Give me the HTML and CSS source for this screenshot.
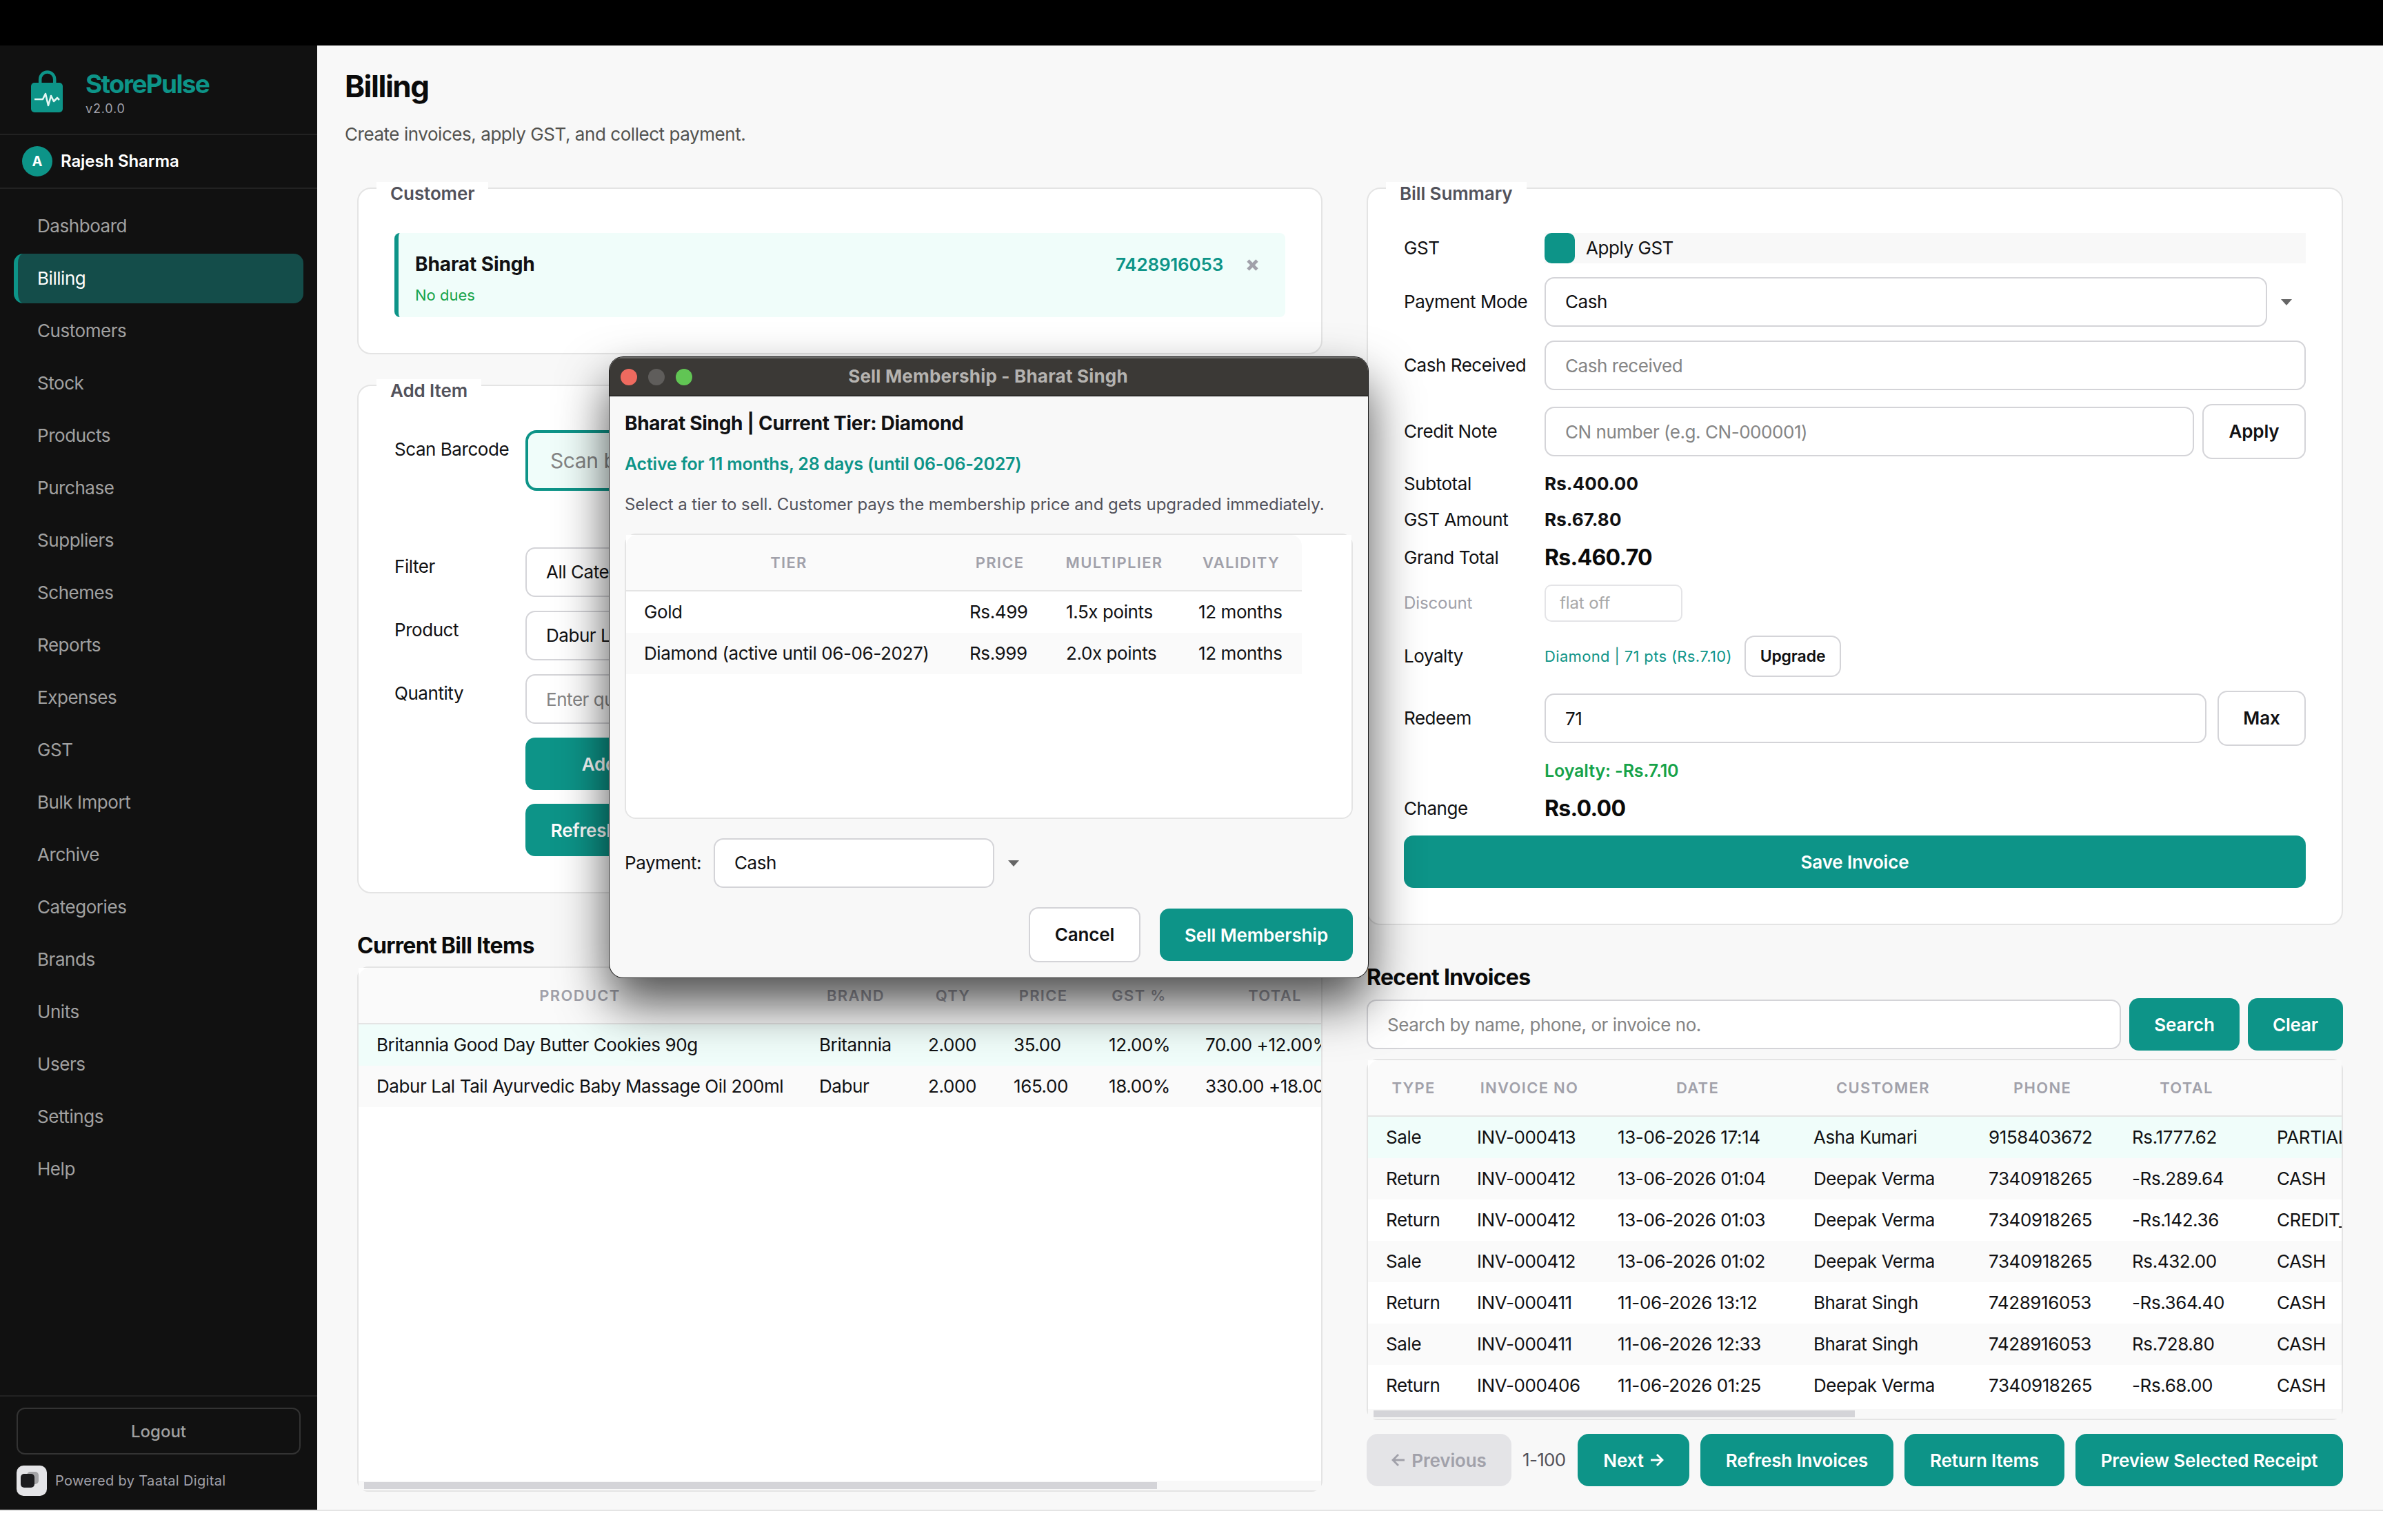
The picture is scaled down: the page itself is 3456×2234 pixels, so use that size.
FILE: index.html
```html
<!DOCTYPE HTML>
<html>
	<head>
		<meta charset='utf-8' />
		<title>StorePulse - Billing</title>
		<link rel="stylesheet" href="styles.css">
	</head>
	<body>
		<div class='topbar'></div>
		<div class='app'>
			<div class='sidebar'>
				<div class='brand'>
					<svg class='logo' width='46' height='62' viewBox='0 0 46 62'>
						<path d='M13.200 20V13a10.500 10.500 0 0 1 21 0v7' fill='none' stroke='#0d9488' stroke-width='4.500'/>
						<rect x='0' y='18' width='46' height='43' rx='5' fill='#0d9488'/>
						<path d='M5 42h12l4-8 4 17 4-14 4 8 5-5 3 3' fill='none' stroke='#e3f6f3' stroke-width='2.600' stroke-linejoin='round'/>
					</svg>
					<div>
						<div class='name'>StorePulse</div>
						<div class='version'>v2.0.0</div>
					</div>
				</div>
				<div class='user'><span class='avatar'>A</span>Rajesh Sharma</div>
				<ul class='menu'>
					<li>Dashboard</li>
					<li class='active'>Billing</li>
					<li>Customers</li>
					<li>Stock</li>
					<li>Products</li>
					<li>Purchase</li>
					<li>Suppliers</li>
					<li>Schemes</li>
					<li>Reports</li>
					<li>Expenses</li>
					<li>GST</li>
					<li>Bulk Import</li>
					<li>Archive</li>
					<li>Categories</li>
					<li>Brands</li>
					<li>Units</li>
					<li>Users</li>
					<li>Settings</li>
					<li>Help</li>
				</ul>
				<div class='side-foot'>
					<div class='logout'>Logout</div>
					<div class='powered'>
						<svg width='44' height='44' viewBox='0 0 44 44'>
							<rect width='44' height='44' rx='10' fill='#e4e4e7'/>
							<rect x='15' y='9' width='17' height='18' rx='5' fill='#a3a3a6'/>
							<rect x='6' y='12' width='20' height='20' rx='5' fill='#1c1c1f'/>
						</svg>
						<span>Powered by Taatal Digital</span>
					</div>
				</div>
			</div>

			<div class='main'>
				<h1>Billing</h1>
				<p class='subtitle'>Create invoices, apply GST, and collect payment.</p>
				<div class='columns'>
					<div class='left'>
						<div class='group'>
							<div class='group-title'>Customer</div>
							<div class='customer'>
								<div class='who'>
									<div class='cust-name'>Bharat Singh</div>
									<div class='dues'>No dues</div>
								</div>
								<div class='phone'>7428916053</div>
								<svg class='close' width='17' height='17' viewBox='0 0 17 17'><path d='M2 2l13 13M15 2L2 15' stroke='#a1a1aa' stroke-width='4.600'/></svg>
							</div>
						</div>
						<div class='group add-item'>
							<div class='group-title'>Add Item</div>
							<div class='row scan'><label>Scan Barcode</label><input class='input' placeholder='Scan barcode'></div>
							<div class='row'><label>Filter</label><div class='input'>All Categories</div></div>
							<div class='row'><label>Product</label><div class='input'>Dabur Lal Tail</div></div>
							<div class='row'><label>Quantity</label><input class='input' placeholder='Enter quantity'></div>
							<div class='row'><label></label><div class='btn'>Add to Bill</div></div>
							<div class='row'><label></label><div class='btn'>Refresh Products</div></div>
						</div>
						<h2>Current Bill Items</h2>
						<div class='table-box bill'>
							<div class='table-in'>
								<table class='bill-table'>
									<colgroup><col class='b1'><col class='b2'><col class='b3'><col class='b4'><col class='b5'><col class='b6'></colgroup>
									<tr><th>PRODUCT</th><th>BRAND</th><th>QTY</th><th>PRICE</th><th>GST %</th><th>TOTAL</th></tr>
									<tr class='sel'><td>Britannia Good Day Butter Cookies 90g</td><td>Britannia</td><td>2.000</td><td>35.00</td><td>12.00%</td><td>70.00 +12.00%</td></tr>
									<tr class='alt'><td>Dabur Lal Tail Ayurvedic Baby Massage Oil 200ml</td><td>Dabur</td><td>2.000</td><td>165.00</td><td>18.00%</td><td>330.00 +18.00%</td></tr>
								</table>
								<div class='scroll'><div class='thumb'></div></div>
							</div>
						</div>
					</div>

					<div class='right'>
						<div class='group summary'>
							<div class='group-title'>Bill Summary</div>
							<div class='row'><label>GST</label><div class='check'><span class='box'></span>Apply GST</div></div>
							<div class='row'><label>Payment Mode</label><div class='input'>Cash</div><div class='arrow'></div></div>
							<div class='row'><label>Cash Received</label><input class='input' placeholder='Cash received'></div>
							<div class='row'><label>Credit Note</label><input class='input' placeholder='CN number (e.g. CN-000001)'><div class='btn-o apply'>Apply</div></div>
							<div class='row'><label>Subtotal</label><b>Rs.400.00</b></div>
							<div class='row'><label>GST Amount</label><b>Rs.67.80</b></div>
							<div class='row big'><label>Grand Total</label><b>Rs.460.70</b></div>
							<div class='row discount'><label>Discount</label><input class='input' placeholder='flat off'></div>
							<div class='row'><label>Loyalty</label><span class='pts'>Diamond | 71 pts (Rs.7.10)</span><div class='btn-o upgrade'>Upgrade</div></div>
							<div class='row'><label>Redeem</label><input class='input' value='71'><div class='btn-o max'>Max</div></div>
							<div class='row'><label></label><span class='off'>Loyalty: -Rs.7.10</span></div>
							<div class='row big'><label>Change</label><b>Rs.0.00</b></div>
							<div class='btn'>Save Invoice</div>
						</div>
						<h2>Recent Invoices</h2>
						<div class='search'>
							<input class='input' placeholder='Search by name, phone, or invoice no.'>
							<div class='btn b-search'>Search</div>
							<div class='btn b-clear'>Clear</div>
						</div>
						<div class='table-box invoices'>
							<div class='table-in'>
								<table class='inv-table'>
									<colgroup><col class='i1'><col class='i2'><col class='i3'><col class='i4'><col class='i5'><col class='i6'><col class='i7'></colgroup>
									<tr><th>TYPE</th><th>INVOICE NO</th><th>DATE</th><th>CUSTOMER</th><th>PHONE</th><th>TOTAL</th><th></th></tr>
									<tr class='sel'><td>Sale</td><td>INV-000413</td><td>13-06-2026 17:14</td><td>Asha Kumari</td><td>9158403672</td><td>Rs.1777.62</td><td>PARTIAL</td></tr>
									<tr class='alt'><td>Return</td><td>INV-000412</td><td>13-06-2026 01:04</td><td>Deepak Verma</td><td>7340918265</td><td>-Rs.289.64</td><td>CASH</td></tr>
									<tr><td>Return</td><td>INV-000412</td><td>13-06-2026 01:03</td><td>Deepak Verma</td><td>7340918265</td><td>-Rs.142.36</td><td>CREDIT_NOTE</td></tr>
									<tr class='alt'><td>Sale</td><td>INV-000412</td><td>13-06-2026 01:02</td><td>Deepak Verma</td><td>7340918265</td><td>Rs.432.00</td><td>CASH</td></tr>
									<tr><td>Return</td><td>INV-000411</td><td>11-06-2026 13:12</td><td>Bharat Singh</td><td>7428916053</td><td>-Rs.364.40</td><td>CASH</td></tr>
									<tr class='alt'><td>Sale</td><td>INV-000411</td><td>11-06-2026 12:33</td><td>Bharat Singh</td><td>7428916053</td><td>Rs.728.80</td><td>CASH</td></tr>
									<tr><td>Return</td><td>INV-000406</td><td>11-06-2026 01:25</td><td>Deepak Verma</td><td>7340918265</td><td>-Rs.68.00</td><td>CASH</td></tr>
								</table>
								<div class='scroll'><div class='thumb'></div></div>
							</div>
						</div>
						<div class='pager'>
							<div class='btn off-btn p1'><svg width='20' height='20' viewBox='0 0 20 20'><path d='M10 2L2 10l8 8M2 10h17' fill='none' stroke='#a1a1aa' stroke-width='2.800'/></svg>Previous</div>
							<span class='range'>1-100</span>
							<div class='btn p2'>Next<svg width='20' height='20' viewBox='0 0 20 20'><path d='M10 2l8 8-8 8M18 10H1' fill='none' stroke='#fff' stroke-width='2.800'/></svg></div>
							<div class='btn p3'>Refresh Invoices</div>
							<div class='btn p4'>Return Items</div>
							<div class='btn p5'>Preview Selected Receipt</div>
						</div>
					</div>
				</div>
			</div>
		</div>

		<div class='dialog'>
			<div class='titlebar'>
				<span class='dot red'></span><span class='dot'></span><span class='dot green'></span>
				<div class='caption'>Sell Membership - Bharat Singh</div>
			</div>
			<div class='dialog-body'>
				<div class='tier'>Bharat Singh | Current Tier: Diamond</div>
				<div class='until'>Active for 11 months, 28 days (until 06-06-2027)</div>
				<div class='hint'>Select a tier to sell. Customer pays the membership price and gets upgraded immediately.</div>
				<div class='table-box tiers'>
					<div class='table-in'>
						<table class='tier-table'>
							<colgroup><col class='t1'><col class='t2'><col class='t3'><col class='t4'></colgroup>
							<tr><th>TIER</th><th>PRICE</th><th>MULTIPLIER</th><th>VALIDITY</th></tr>
							<tr><td>Gold</td><td>Rs.499</td><td>1.5x points</td><td>12 months</td></tr>
							<tr class='alt'><td>Diamond (active until 06-06-2027)</td><td>Rs.999</td><td>2.0x points</td><td>12 months</td></tr>
						</table>
					</div>
				</div>
				<div class='payment'><label>Payment:</label><div class='input'>Cash</div><div class='arrow'></div></div>
				<div class='actions'>
					<div class='btn-o cancel'>Cancel</div>
					<div class='btn sell'>Sell Membership</div>
				</div>
			</div>
		</div>
	</body>
</html>
```

FILE: styles.css
```css
*{box-sizing:border-box;}
body{
	position:relative;
	margin:0;
	width:3456px;
	height:2234px;
	overflow:hidden;
	background:#fff;
	color:#111113;
	font-family:Inter, "Liberation Sans", sans-serif;
	font-size:26px;
	line-height:32px;
	letter-spacing:-0.45px;
}
ul,h1,h2,p{margin:0;padding:0;list-style:none;}
svg{display:block;}

.topbar{height:66px;background:#000;}
.app{
	display:flex;
	height:2126px;
	border-bottom:2px solid #e4e4e4;
}

/* sidebar */
.sidebar{
	display:flex;
	flex-direction:column;
	width:460px;
	background:#111;
	color:#a1a1a1;
}
.brand{
	display:flex;
	height:130px;
	padding:36px 0 0 45px;
	border-bottom:2px solid #222;
}
.brand .logo{margin-right:33px;}
.brand .name{
	margin-top:-2px;
	font-size:37px;
	line-height:44px;
	font-weight:700;
	letter-spacing:-1.7px;
	color:#0d9488;
}
.brand .version{
	margin-top:2px;
	font-size:18px;
	line-height:24px;
	letter-spacing:0.8px;
	color:#a1a1aa;
}
.user{
	display:flex;
	align-items:center;
	height:78px;
	padding-left:32px;
	border-bottom:2px solid #222;
	font-size:24px;
	font-weight:600;
	letter-spacing:-0.1px;
	color:#fff;
}
.avatar{
	width:44px;
	height:44px;
	margin-right:12px;
	border-radius:50%;
	background:#0d9488;
	line-height:44px;
	text-align:center;
	font-size:20px;
	font-weight:700;
}
.menu{flex:1;padding:18px 20px 0;}
.menu li{
	height:72px;
	margin-bottom:4px;
	padding-left:28px;
	border-left:6px solid transparent;
	border-radius:14px;
	line-height:72px;
}
.menu .active{
	border-left-color:#0d9488;
	background:#144d4a;
	color:#fff;
}
.side-foot{
	height:166px;
	padding:16px 24px 0;
	border-top:2px solid #222;
}
.logout{
	height:68px;
	border:2px solid #333;
	border-radius:12px;
	line-height:66px;
	text-align:center;
	font-size:24px;
	font-weight:500;
	letter-spacing:0;
}
.powered{
	display:flex;
	align-items:center;
	gap:12px;
	margin-top:16px;
	font-size:20px;
	letter-spacing:0.35px;
	color:#a1a1aa;
}

/* page */
.main{flex:1;padding:34px 58px 0 40px;background:#f8f8f8;}
h1{
	font-size:44px;
	line-height:50px;
	letter-spacing:-1.5px;
	color:#0a0a0a;
}
.subtitle{margin-top:29px;color:#52524f;}
.columns{display:flex;gap:64px;padding:61px 0 0 18px;}
.left{width:1400px;}
.right{width:1416px;}
h2{
	margin:56px 0 10px;
	font-size:32px;
	line-height:40px;
	letter-spacing:-0.7px;
	color:#0a0a0a;
}

.group{
	position:relative;
	padding:64px 52px 52px;
	border:2px solid #e4e4e4;
	border-radius:20px;
	background:#fff;
}
.group-title{
	position:absolute;
	left:26px;
	top:-10px;
	padding:0 20px;
	background:#fff;
	line-height:34px;
	font-size:26px;
	font-weight:600;
	letter-spacing:-0.1px;
	color:#52525b;
}
.customer{
	display:flex;
	height:122px;
	padding:24px 39px 0 24px;
	border-left:6px solid #0d9488;
	border-radius:8px;
	background:#f0fdfa;
}
.who{flex:1;padding-top:5px;}
.cust-name{font-size:28px;font-weight:650;letter-spacing:-0.1px;}
.dues{margin-top:14px;font-size:22px;line-height:30px;letter-spacing:0;color:#16a34a;}
.phone{line-height:44px;font-weight:600;letter-spacing:-0.2px;color:#0d9488;}
.close{margin:14px 0 0 34px;}

.row{display:flex;align-items:center;gap:0;}
.row + .row, .row + .btn{margin-top:20px;}
.row label{width:204px;flex:none;}
.input{
	display:block;
	flex:1;
	min-width:0;
	height:72px;
	margin:0;
	padding:0 28px;
	border:2px solid #d4d4d8;
	border-radius:14px;
	background:#fff;
	color:#111113;
	font:inherit;
	letter-spacing:inherit;
	line-height:68px;
}
.input::placeholder{color:#858585;opacity:1;}
.arrow{
	width:0;
	height:0;
	border:8px solid transparent;
	border-top:9px solid #666;
	border-bottom:0;
}
.btn, .btn-o{
	height:76px;
	border-radius:14px;
	background:#0d9488;
	color:#fff;
	line-height:77px;
	text-align:center;
	font-weight:600;
	letter-spacing:-0.15px;
}
.btn-o{
	height:80px;
	border:2px solid #d4d4d8;
	background:#fff;
	color:#111113;
}

.add-item{margin-top:44px;}
.add-item .row{align-items:flex-start;}
.add-item label{width:190px;padding-top:12px;height:32px;}
.add-item .btn{width:288px;}
.add-item .scan{margin-bottom:82px;}
.add-item .scan .input{
	height:88px;
	padding:0 32px;
	border:4px solid #0d9488;
	border-radius:16px;
	background:#f0fdfa;
	font-size:30px;
}
.add-item .scan + .row{margin-top:0;}

.check{
	display:flex;
	flex:1;
	height:44px;
	background:#f8f8f8;
	line-height:44px;
}
.check .box{
	width:44px;
	margin-right:16px;
	border-radius:10px;
	background:#0d9488;
}
.summary .arrow{margin:0 20px;}
.summary b{font-size:26px;letter-spacing:0.1px;}
.big{height:38px;}
.summary .big b{font-size:32px;letter-spacing:-0.7px;color:#0a0a0a;}
.apply{width:150px;line-height:76px;margin-left:12px;}
.max{width:128px;line-height:76px;margin-left:16px;}
.discount{font-size:24px;letter-spacing:-0.1px;color:#a1a1aa;}
.discount .input{
	flex:none;
	width:200px;
	height:54px;
	padding:0 20px;
	border-color:#e4e4e7;
	border-radius:10px;
}
.discount .input::placeholder{color:#a8a8a8;}
.pts{font-size:22px;letter-spacing:0.35px;color:#0d9488;}
.upgrade{
	width:140px;
	height:60px;
	margin-left:auto;
	margin-right:674px;
	line-height:56px;
	font-size:23px;
}
.off{font-size:25px;font-weight:600;letter-spacing:-0.1px;color:#16a34a;}

/* tables */
.table-box{border:2px solid #e4e4e4;border-radius:16px;}
.table-in{
	display:flex;
	flex-direction:column;
	height:100%;
	overflow:hidden;
	background:#fff;
}
.bill{height:762px;}
.invoices{height:524px;}
table{
	flex:none;
	border-collapse:separate;
	border-spacing:0;
	table-layout:fixed;
}
th{
	height:82px;
	padding:0;
	border-bottom:2px solid #e4e4e4;
	background:#fafafa;
	font-size:22px;
	font-weight:600;
	letter-spacing:1.3px;
	color:#a1a1aa;
}
th:first-child{border-top-left-radius:16px;}
td{
	height:60px;
	padding:0 0 0 26px;
	white-space:nowrap;
	letter-spacing:-0.4px;
}
.sel td{background:#f0fdfa;}
.alt td{background:#fafafa;}
.bill-table{width:1456px;}
.b1{width:642px;}
.b2{width:158px;}
.b3{width:124px;}
.b4{width:138px;}
.b5{width:140px;}
.b6{width:254px;}
.inv-table{width:1602px;}
.i1{width:132px;}
.i2{width:204px;}
.i3{width:284px;}
.i4{width:254px;}
.i5{width:208px;}
.i6{width:210px;}
.i7{width:310px;}
.scroll{
	height:14px;
	margin-top:auto;
	padding:2px 8px;
	background:#f8f8f8;
}
.thumb{height:10px;background:#d4d4d8;}
.bill .thumb{width:1150px;}
.invoices .thumb{width:698px;}

.search{display:flex;align-items:center;gap:12px;margin-bottom:12px;}
.b-search{width:160px;}
.b-clear{width:138px;}
.pager{display:flex;gap:16px;margin-top:20px;}
.pager .btn{border-radius:16px;}
.p1, .p2{display:flex;align-items:center;justify-content:center;gap:9px;}
.p1{width:210px;}
.p2{width:162px;}
.p3{width:280px;}
.p4{width:232px;}
.p5{width:388px;}
.off-btn{background:#e4e4e7;color:#a1a1aa;}
.range{
	width:64px;
	line-height:76px;
	letter-spacing:-0.7px;
	white-space:nowrap;
	color:#52525b;
}

/* sell membership window */
.dialog{
	position:absolute;
	left:884px;
	top:518px;
	width:1100px;
	height:900px;
	border-radius:20px;
	background:#f8f8f8;
	box-shadow:0 0 0 1px #1a1a1a, 0 36px 72px rgba(0,0,0,0.7);
	overflow:hidden;
}
.titlebar{
	display:flex;
	align-items:center;
	gap:16px;
	height:57px;
	padding-left:16px;
	border-top:2px solid #6b6a68;
	border-bottom:1px solid #000;
	background:#3b3936;
}
.dot{width:24px;height:24px;border-radius:50%;background:#5f5d5b;}
.red{background:#ee6a5f;}
.green{background:#61c554;}
.caption{
	flex:1;
	padding-right:138px;
	margin-top:-2px;
	text-align:center;
	font-size:26px;
	font-weight:650;
	letter-spacing:0.2px;
	color:#b5b3b0;
}
.dialog-body{padding:22px 22px 0;}
.tier{font-size:28px;line-height:34px;font-weight:700;letter-spacing:-0.3px;}
.until{margin-top:26px;font-size:25px;font-weight:600;letter-spacing:-0.2px;color:#0d9488;}
.hint{margin-top:27px;font-size:24px;letter-spacing:-0.05px;color:#52525b;white-space:nowrap;}
.tiers{height:414px;margin-top:26px;}
.tiers .table-in{border-radius:0 0 14px 14px;}
.tier-table{width:980px;}
.tier-table th:last-child{border-top-right-radius:16px;}
.t1{width:472px;}
.t2{width:140px;}
.t3{width:192px;}
.t4{width:176px;}
.payment{display:flex;align-items:center;margin-top:28px;}
.payment label{width:129px;}
.payment .input{flex:none;width:407px;}
.payment .arrow{margin-left:20px;}
.actions{display:flex;align-items:center;justify-content:flex-end;gap:28px;margin-top:28px;}
.cancel{width:162px;line-height:76px;}
.sell{width:280px;}
```
